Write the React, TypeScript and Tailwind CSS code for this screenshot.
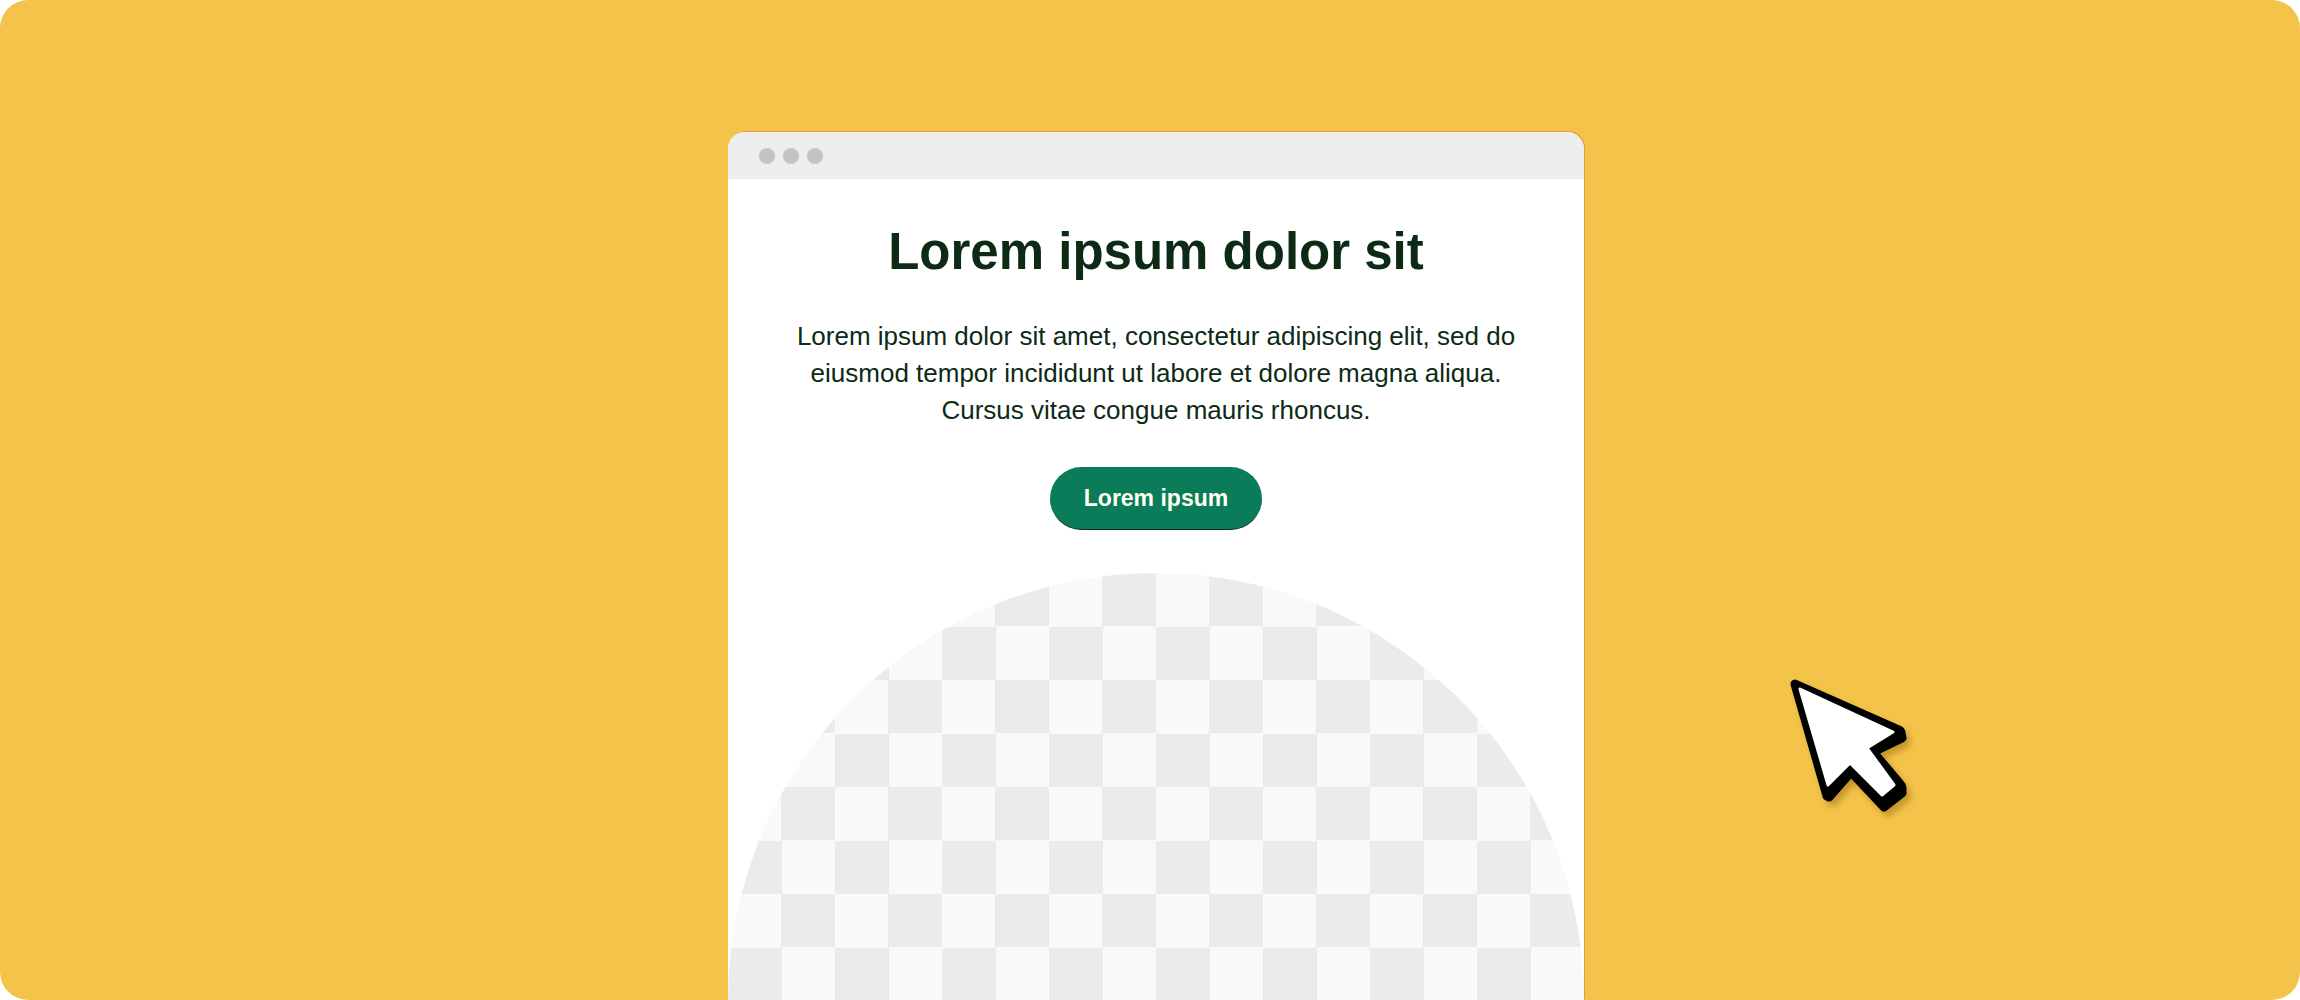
function CursorArrow() {
  return (
    <svg
      aria-hidden="true"
      viewBox="0 0 180 180"
      className="absolute left-[76.5%] top-[65%] size-[180px] overflow-visible drop-shadow-[4px_5px_3px_rgba(130,80,0,0.4)]"
    >
      <path
        d="M35 34 L139 80 Q141 81 141 83 L142 88 L113 102 L140 134 Q142 136 142 138 L142 143 L124 157 L91 122 L69 147 L67 146 Z"
        fill="#000"
        stroke="#000"
        strokeWidth="9"
        strokeLinejoin="round"
      />
      <path
        d="M40 39 L133 82 L107 98 L134 135 L122 145 L90 113 L68 135 Z"
        fill="#fff"
        stroke="#fff"
        strokeWidth="3"
        strokeLinejoin="round"
      />
    </svg>
  );
}

function TitleBar() {
  return (
    <header className="flex h-[47px] shrink-0 items-center gap-2 bg-[#eeeeee] px-[31px]">
      <span className="size-4 rounded-full bg-[#c3c3c3]" />
      <span className="size-4 rounded-full bg-[#c3c3c3]" />
      <span className="size-4 rounded-full bg-[#c3c3c3]" />
    </header>
  );
}

export default function App() {
  return (
    <div className="bg-white">
      <main className="relative flex h-screen justify-center overflow-hidden rounded-[28px] bg-[#f4c44a] pl-3 pt-[132px] font-['Liberation_Sans',Arial,sans-serif]">
        <article className="flex w-full max-w-[856px] flex-col overflow-hidden rounded-t-[17px] bg-white shadow-[1px_-1px_0_#eb983c]">
          <TitleBar />
          <section className="flex shrink-0 flex-col items-center px-16 pt-[43px] text-center text-[#0c2a14]">
            <h1 className="text-[51px] font-bold leading-[60px]">Lorem ipsum dolor sit</h1>
            <p className="mt-9 text-[26px] leading-[37px]">
              Lorem ipsum dolor sit amet, consectetur adipiscing elit, sed do eiusmod tempor incididunt ut labore et
              dolore magna aliqua. Cursus vitae congue mauris rhoncus.
            </p>
            <button
              type="button"
              className="mt-[38px] h-[63px] rounded-full border-b border-[#0c2a14] bg-[#0a7c5a] px-[34px] pt-px text-[23px] font-bold text-[#fffff0]"
            >
              Lorem ipsum
            </button>
          </section>
          <div className="mt-[43px] aspect-square w-full shrink-0 rounded-full bg-[repeating-conic-gradient(#ebebe9_0_25%,#f9f9f9_0_50%)] bg-[length:12.5%_12.5%]" />
        </article>
        <CursorArrow />
      </main>
    </div>
  );
}
